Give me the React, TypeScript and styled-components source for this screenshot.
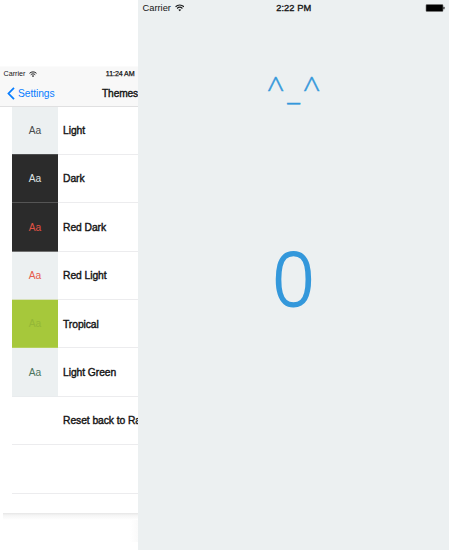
import React from "react";
import styled, { createGlobalStyle } from "styled-components";

const GlobalStyle = createGlobalStyle`
  * { box-sizing: border-box; }
  html, body { margin: 0; background: #fff; overflow: hidden; }
  body { font-family: "Liberation Sans", Arial, sans-serif; color: #111; }
`;

const Stage = styled.main`
  display: flex;
  align-items: flex-start;
  width: 449px;
  height: 550px;
  overflow: hidden;
`;

const SettingsPhone = styled.section`
  width: 138px;
  height: 447px;
  margin-top: 66px;
  white-space: nowrap;
  background: #fff;
  overflow: hidden;
`;

const SettingsColumn = styled.div`
  flex: none;
  width: 138px;
`;

const BottomShadow = styled.div`
  height: 7px;
  margin-left: 3px;
  background: linear-gradient(#e6e6e6, #f5f5f5 35%, #fff);
`;

const SideShadow = styled.div`
  width: 8px;
  height: 22px;
  margin-left: auto;
  background: linear-gradient(to right, #fff, #fafafa);
`;

const TopBars = styled.header`
  height: 40.5px;
  background: #f8f8f8;
  border-top: 1px solid #fbfbfb;
  border-bottom: 1px solid #e0e0e1;
`;

const Status = styled.div`
  display: flex;
  height: 14px;
  align-items: center;
  padding-left: 3.5px;
`;

const Text = styled.span<{ $size: number; $spacing?: number; $stroke?: number; $color?: string }>`
  font-size: ${(p) => p.$size}px;
  line-height: 14px;
  letter-spacing: ${(p) => p.$spacing ?? 0}px;
  color: ${(p) => p.$color ?? "#151515"};
  -webkit-text-stroke: ${(p) => p.$stroke ?? 0}px currentColor;
`;

const SmallTime = styled(Text)`
  margin-left: auto;
  padding-right: 3.5px;
`;

const NavBar = styled.nav`
  display: flex;
  align-items: center;
  height: 25px;
  padding-left: 7px;
`;

const Title = styled(Text)`
  margin-left: auto;
`;

const Chevron = styled.svg`
  width: 8px;
  height: 13px;
  margin-right: 3px;
`;

const Wifi = styled.svg<{ $width: number }>`
  width: ${(p) => p.$width}px;
  height: ${(p) => p.$width * 0.8}px;
  margin-left: 4px;
`;

const List = styled.ul`
  list-style: none;
  margin: 0;
  padding: 0 0 0 12px;
`;

const Row = styled.li`
  display: flex;
  height: 48.4px;
  align-items: stretch;
  border-bottom: 1px solid #ececee;
`;

const Swatch = styled.div<{ $bg: string; $edge: string }>`
  display: flex;
  align-items: center;
  justify-content: center;
  flex: none;
  width: 46px;
  margin-bottom: -1px;
  padding-top: 1.4px;
  border-bottom: 1px solid ${(p) => p.$edge};
  background: ${(p) => p.$bg};
`;

const Label = styled.div`
  display: flex;
  align-items: center;
  padding: 1.8px 0 0 5px;
`;

const CounterPhone = styled.section`
  flex: none;
  width: 311px;
  height: 550px;
  background: #ecf0f1;
`;

const CounterStatus = styled.header`
  display: grid;
  grid-template-columns: 1fr auto 1fr;
  align-items: center;
  height: 16px;
  padding: 0 4px 0 4.5px;
`;

const Network = styled.div`
  display: flex;
  align-items: center;
`;

const Battery = styled.svg`
  width: 20px;
  height: 8px;
  justify-self: end;
`;

const Face = styled.div`
  height: 50px;
  margin-top: 47px;
  padding-left: 3px;
  text-align: center;
  font: 300 31px/50px "Open Sans", "Noto Sans", sans-serif;
  letter-spacing: 2.8px;
  color: #3498db;
  -webkit-text-stroke: 0.5px #3498db;
`;

const Count = styled.div`
  height: 100px;
  margin-top: 115px;
  text-align: center;
  font: 300 73.5px/100px "Open Sans", "Noto Sans", sans-serif;
  color: #3498db;
  -webkit-text-stroke: 1.9px #3498db;
`;

const themes = [
  { name: "Light", bg: "#ecf0f1", fg: "#484b4c", edge: "#4d4e4f" },
  { name: "Dark", bg: "#2b2b2b", fg: "#dfe3e4", edge: "#555555" },
  { name: "Red Dark", bg: "#2b2b2b", fg: "#e05244", edge: "#707070" },
  { name: "Red Light", bg: "#ecf0f1", fg: "#e65a4c", edge: "#d8e1b8" },
  { name: "Tropical", bg: "#a6c83b", fg: "#94b737", edge: "#b5d15d" },
  { name: "Light Green", bg: "#ecf0f1", fg: "#4b745d", edge: "#e9ecee" },
  { name: "Reset back to Ra" },
  { name: "" },
];

const WifiIcon = ({ width }: { width: number }) => (
  <Wifi $width={width} viewBox="0 0 10 8" fill="none" stroke="#171819" strokeWidth="1.2">
    <path d="M.6 2.9C3.1.5 6.9.5 9.4 2.9M2.2 4.7c1.6-1.5 4-1.5 5.6 0" />
    <path d="M3.5 6.1c.9-.8 2.1-.8 3 0L5 7.7Z" fill="#171819" stroke="none" />
  </Wifi>
);

export default function App() {
  return (
    <>
      <GlobalStyle />
      <Stage>
        <SettingsColumn>
          <SettingsPhone>
            <TopBars>
              <Status>
                <Text $size={7.2}>Carrier</Text>
                <WifiIcon width={8} />
                <SmallTime $size={7.1} $stroke={0.25} $spacing={-0.1}>11:24 AM</SmallTime>
              </Status>
              <NavBar>
                <Chevron viewBox="0 0 8 13" fill="none" stroke="#087dff" strokeWidth="1.8">
                  <path d="M7 .8 1.5 6.5 7 12.2" />
                </Chevron>
                <Text $size={10.3} $color="#087dff" $spacing={-0.08}>Settings</Text>
                <Title $size={10.2} $stroke={0.4} $spacing={-0.14}>Themes</Title>
              </NavBar>
            </TopBars>
            <List>
              {themes.map((t, i) => (
                <Row key={i}>
                  <Swatch $bg={t.bg ?? "transparent"} $edge={t.edge ?? "transparent"}>
                    {t.fg && <Text $size={10.2} $color={t.fg}>Aa</Text>}
                  </Swatch>
                  <Label>
                    <Text $size={10.3} $stroke={0.4} $spacing={-0.06}>{t.name}</Text>
                  </Label>
                </Row>
              ))}
            </List>
          </SettingsPhone>
          <BottomShadow />
          <SideShadow />
        </SettingsColumn>
        <CounterPhone>
          <CounterStatus>
            <Network>
              <Text $size={9.3}>Carrier</Text>
              <WifiIcon width={9.5} />
            </Network>
            <Text $size={9.3} $stroke={0.35} $spacing={0.05}>2:22 PM</Text>
            <Battery viewBox="0 0 20 8">
              <rect x="1" y=".5" width="17" height="7" rx=".8" fill="#000" stroke="#777" strokeWidth=".6" />
              <rect x="18" y="2.7" width="1.7" height="2.6" rx=".5" fill="#555" />
            </Battery>
          </CounterStatus>
          <Face>^_^</Face>
          <Count>0</Count>
        </CounterPhone>
      </Stage>
    </>
  );
}
